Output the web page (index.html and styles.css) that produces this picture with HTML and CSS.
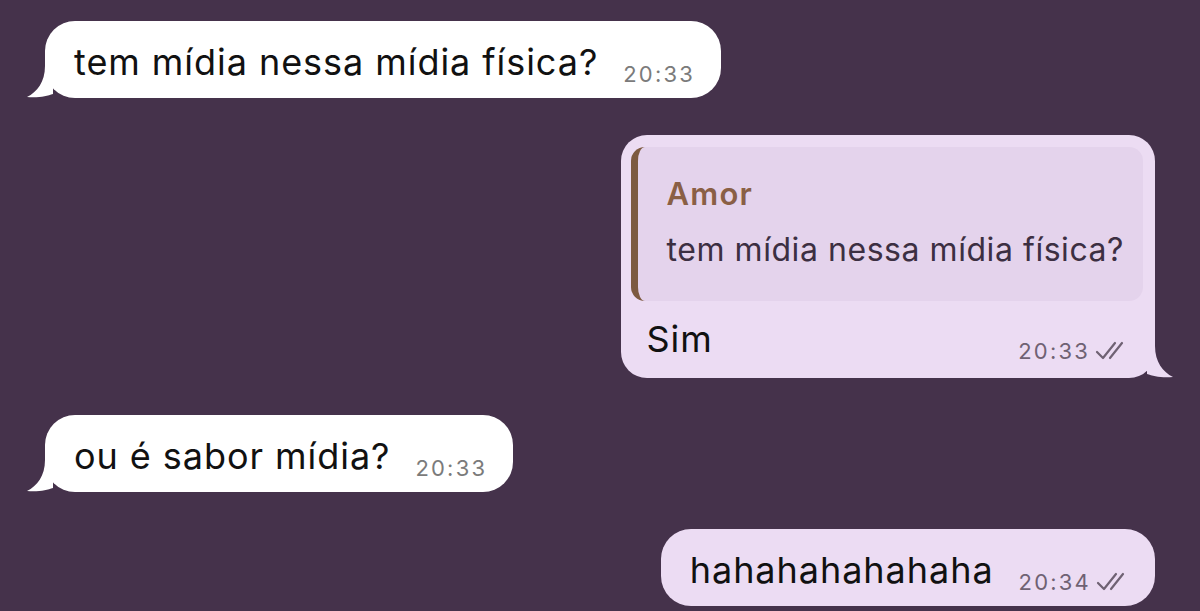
FILE: index.html
```html
<!DOCTYPE html>
<html lang="pt-BR">
<head>
<meta charset="UTF-8">
<meta name="viewport" content="width=device-width, initial-scale=1.0">
<title>Conversa</title>
<link rel="stylesheet" href="styles.css">
</head>
<body>

<div class="chat">

  <div class="msg incoming">
    <span class="msg-text">tem mídia nessa mídia física?</span>
    <span class="msg-meta">20:33</span>
    <svg class="tail tail-left" width="26" height="32" viewBox="0 0 26 32"><path d="M18 0 L26 0 L26 28 C20 30 12 32 0 31 C10 26 18 16 18 0 Z"/></svg>
  </div>

  <div class="msg outgoing reply-msg">
    <div class="reply">
      <div class="reply-name">Amor</div>
      <div class="reply-text">tem mídia nessa mídia física?</div>
    </div>
    <div class="reply-body">
      <span class="msg-text">Sim</span>
      <span class="msg-meta">20:33
        <svg class="checks" width="34" height="20" viewBox="0 0 34 20"><path d="M3 11 L9 17 L21 2 M16 17 L28 2"/></svg>
      </span>
    </div>
    <svg class="tail tail-right" width="26" height="32" viewBox="0 0 26 32"><path d="M8 0 L0 0 L0 28 C6 30 14 32 26 31 C16 26 8 16 8 0 Z"/></svg>
  </div>

  <div class="msg incoming">
    <span class="msg-text">ou é sabor mídia?</span>
    <span class="msg-meta">20:33</span>
    <svg class="tail tail-left" width="26" height="32" viewBox="0 0 26 32"><path d="M18 0 L26 0 L26 28 C20 30 12 32 0 31 C10 26 18 16 18 0 Z"/></svg>
  </div>

  <div class="msg outgoing">
    <span class="msg-text">hahahahahahaha</span>
    <span class="msg-meta">20:34
      <svg class="checks" width="34" height="20" viewBox="0 0 34 20"><path d="M3 11 L9 17 L21 2 M16 17 L28 2"/></svg>
    </span>
  </div>

</div>

</body>
</html>
```

FILE: styles.css
```css
body {
  margin: 0;
  background-color: #45324b;
  font-family: Inter, "Liberation Sans", Arial, sans-serif;
  overflow: hidden;
}
.chat {
  display: flex;
  flex-direction: column;
  gap: 37px;
  padding: 21px 45px 0 45px;
}
.msg {
  position: relative;
  display: flex;
  align-items: flex-end;
  gap: 25px;
  min-height: 77px;
  box-sizing: border-box;
  padding: 14px 26px 10px 29px;
  border-radius: 30px;
}
.msg-text {
  font-size: 36px;
  letter-spacing: 0.95px;
  line-height: 44px;
  color: #111;
  padding-bottom: 4px;
}
.msg-meta {
  display: flex;
  align-items: center;
  gap: 4px;
  font-size: 22px;
  letter-spacing: 2.2px;
  line-height: 28px;
  color: #7b7b7b;
}
.incoming {
  align-self: flex-start;
  background-color: #ffffff;
}
.outgoing {
  align-self: flex-end;
  background-color: #ecdcf3;
}
.outgoing .msg-meta {
  color: #6f6273;
}
.tail {
  position: absolute;
  bottom: 0;
}
.tail-left {
  left: -18px;
  fill: #ffffff;
}
.tail-right {
  right: -18px;
  fill: #ecdcf3;
}
.checks {
  fill: none;
  stroke: #6f6273;
  stroke-width: 2.2;
  stroke-linecap: round;
  stroke-linejoin: round;
}

/* reply bubble */
.reply-msg {
  flex-direction: column;
  align-items: stretch;
  gap: 0;
  padding: 12px 12px 13px 10px;
  border-radius: 26px 26px 26px 26px;
}
.reply {
  background-color: #e4d3ec;
  border-left: 7px solid #7d5a40;
  border-radius: 14px;
  padding: 30px 19px 32px 29px;
}
.reply-name {
  font-size: 31px;
  font-weight: 600;
  letter-spacing: 1.2px;
  color: #8a5f45;
  line-height: 34px;
}
.reply-text {
  font-size: 32px;
  letter-spacing: 0.55px;
  line-height: 38px;
  color: #3c2f42;
  margin-top: 20px;
}
.reply-body {
  display: flex;
  justify-content: space-between;
  align-items: flex-end;
  padding: 16px 15px 0 16px;
}
```
